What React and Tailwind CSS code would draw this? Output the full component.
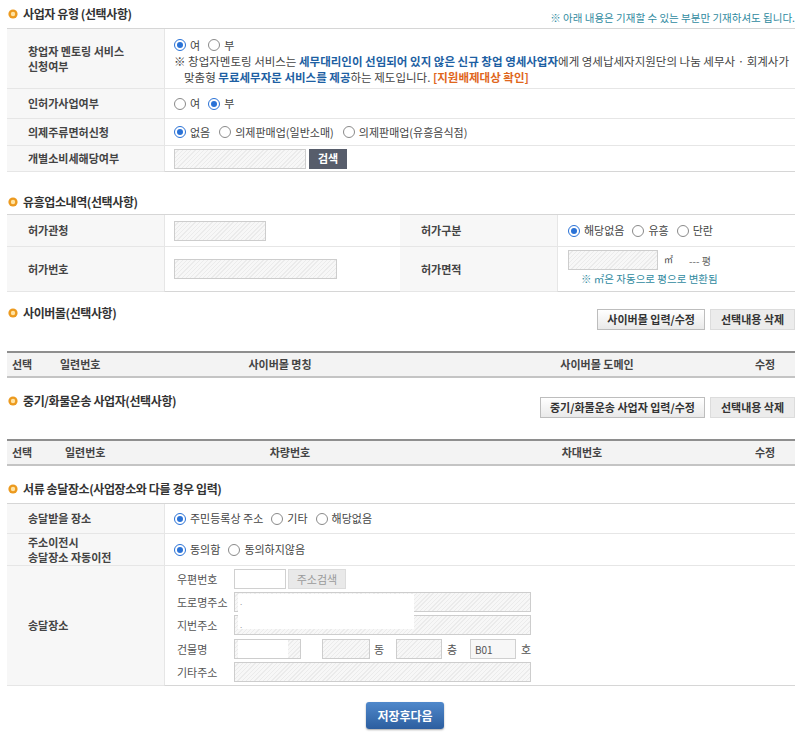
import React from "react";

const hatch =
  "border border-[#cdcdcd] bg-[#f4f4f4] bg-[image:repeating-linear-gradient(135deg,#f7f7f7_0px,#f7f7f7_2px,#ebebeb_2px,#ebebeb_3px)]";

function Dot() {
  return (
    <svg width="10" height="10" viewBox="0 0 10 10" className="shrink-0">
      <circle cx="5" cy="5" r="4.6" fill="#ec9a1f" />
      <circle cx="5" cy="5" r="2.2" fill="#ffe3a3" />
    </svg>
  );
}

function Title({ children }) {
  return (
    <h3 className="flex items-center gap-[5px] pl-[1px] text-[12px] font-bold leading-[14px] tracking-[-0.4px] text-[#333]">
      <Dot />
      {children}
    </h3>
  );
}

function Radio({ checked, label, gap = "mr-[8px]" }) {
  return (
    <span className={`inline-flex items-center gap-[4px] ${gap}`}>
      {checked ? (
        <span className="flex h-[12px] w-[12px] items-center justify-center rounded-full border border-[#2a72d6] bg-white">
          <span className="h-[6px] w-[6px] rounded-full bg-[#2a72d6]" />
        </span>
      ) : (
        <span className="h-[12px] w-[12px] rounded-full border border-[#8a8a8a] bg-white" />
      )}
      <span>{label}</span>
    </span>
  );
}

function Label({ children, className = "" }) {
  return (
    <div
      className={`flex items-center border-b border-[#e6e6e6] bg-[#f7f7f7] pl-[21px] text-[11px] font-bold leading-[15px] text-[#444] ${className}`}
    >
      <div>{children}</div>
    </div>
  );
}

function Value({ children, className = "" }) {
  return (
    <div
      className={`flex items-center border-b border-l border-[#e6e6e6] pl-[9px] text-[11px] text-[#444] ${className}`}
    >
      {children}
    </div>
  );
}

function GrayButtons({ first }) {
  return (
    <div className="mt-[3px] flex gap-[5px]">
      <button className="h-[21px] border border-[#bdbdbd] bg-[image:linear-gradient(#ffffff,#e9e9e9)] px-[9px] text-[11px] font-bold text-[#333]">
        {first}
      </button>
      <button className="h-[21px] w-[85px] border border-[#dcdcdc] bg-[#ececec] text-[11px] font-bold text-[#333]">
        선택내용 삭제
      </button>
    </div>
  );
}

function Box({ className = "", children }) {
  return <div className={`${hatch} h-[20px] ${className}`}>{children}</div>;
}

export default function App() {
  return (
    <div className="min-h-[732px] bg-white pl-[7px] pr-[5px] font-['Noto_Sans_CJK_KR',sans-serif] text-[#444]">
      {/* 사업자 유형 */}
      <div className="flex h-[28px] items-start justify-between pt-[7px]">
        <Title>사업자 유형 (선택사항)</Title>
        <span className="mt-[4px] text-[10.5px] leading-[14px] text-[#2f8aa0]">
          ※ 아래 내용은 기재할 수 있는 부분만 기재하셔도 됩니다.
        </span>
      </div>
      <div className="grid grid-cols-[157px_1fr] border-t border-[#d6d6d6]">
        <Label className="h-[60px]">
          창업자 멘토링 서비스
          <br />
          신청여부
        </Label>
        <div className="flex h-[60px] flex-col border-b border-l border-[#e6e6e6] pl-[9px] pt-[8px] text-[11.5px] text-[#444]">
          <div className="flex h-[16px] items-center text-[11px]">
            <Radio checked label="여" />
            <Radio label="부" />
          </div>
          <div className="whitespace-nowrap leading-[16px]">
            ※ 창업자멘토링 서비스는{" "}
            <b className="text-[#1d5fa3]">세무대리인이 선임되어 있지 않은 신규 창업 영세사업자</b>에게
            영세납세자지원단의 나눔 세무사 · 회계사가
          </div>
          <div className="whitespace-nowrap pl-[10px] leading-[16px]">
            맞춤형 <b className="text-[#1d5fa3]">무료세무자문 서비스를 제공</b>하는 제도입니다.{" "}
            <b className="text-[#e0661c]">[지원배제대상 확인]</b>
          </div>
        </div>

        <Label className="h-[30px]">인허가사업여부</Label>
        <Value className="h-[30px]">
          <Radio label="여" />
          <Radio checked label="부" />
        </Value>

        <Label className="h-[27px]">의제주류면허신청</Label>
        <Value className="h-[27px]">
          <Radio checked label="없음" gap="mr-[9px]" />
          <Radio label="의제판매업(일반소매)" gap="mr-[9px]" />
          <Radio label="의제판매업(유흥음식점)" />
        </Value>

        <Label className="h-[26px] border-[#d6d6d6]">개별소비세해당여부</Label>
        <Value className="h-[26px] gap-[3px] border-b-[#d6d6d6]">
          <Box className="h-[19px] w-[132px]" />
          <button className="h-[20px] w-[38px] bg-[#575d6b] text-[11px] font-bold text-white">검색</button>
        </Value>
      </div>

      {/* 유흥업소내역 */}
      <div className="mt-[23px] h-[14px]">
        <Title>유흥업소내역(선택사항)</Title>
      </div>
      <div className="mt-[5px] grid grid-cols-[157px_236px_157px_1fr] border-t border-[#d6d6d6]">
        <Label className="h-[32px]">허가관청</Label>
        <Value className="h-[32px]">
          <Box className="w-[92px]" />
        </Value>
        <Label className="h-[32px] pl-[20px]">허가구분</Label>
        <Value className="h-[32px] pl-[10px]">
          <Radio checked label="해당없음" />
          <Radio label="유흥" />
          <Radio label="단란" />
        </Value>

        <Label className="h-[45px] border-[#d6d6d6]">허가번호</Label>
        <Value className="h-[45px] border-b-[#d6d6d6]">
          <Box className="h-[19px] w-[163px]" />
        </Value>
        <Label className="h-[45px] border-[#d6d6d6] pl-[20px]">허가면적</Label>
        <div className="flex h-[45px] flex-col border-b border-l border-[#d6d6d6] border-l-[#e6e6e6] pl-[10px] pt-[3px] text-[11px] text-[#444]">
          <div className="flex h-[20px] items-center">
            <Box className="w-[90px]" />
            <span className="ml-[6px] text-[9px]">㎡</span>
            <span className="ml-[16px] text-[10px] text-[#666]">--- 평</span>
          </div>
          <div className="mt-[2px] pl-[13px] text-[10.5px] leading-[14px] text-[#2f8aa0]">
            ※ ㎡은 자동으로 평으로 변환됨
          </div>
        </div>
      </div>

      {/* 사이버몰 */}
      <div className="mt-[14px] flex items-start justify-between">
        <Title>사이버몰(선택사항)</Title>
        <GrayButtons first="사이버몰 입력/수정" />
      </div>
      <div className="mt-[21px] grid h-[27px] grid-cols-[38px_75px_320px_314px_1fr] items-center border-t-2 border-b-2 border-t-[#8e8e8e] border-b-[#c4c4c4] bg-[#f3f3f3] text-[11px] font-bold text-[#444]">
        <span className="pl-[5px]">선택</span>
        <span className="pl-[15px]">일련번호</span>
        <span className="text-center">사이버몰 명칭</span>
        <span className="text-center">사이버몰 도메인</span>
        <span className="pl-[1px]">수정</span>
      </div>

      {/* 중기/화물운송 */}
      <div className="mt-[16px] flex items-start justify-between">
        <Title>중기/화물운송 사업자(선택사항)</Title>
        <GrayButtons first="중기/화물운송 사업자 입력/수정" />
      </div>
      <div className="mt-[21px] grid h-[27px] grid-cols-[38px_85px_320px_264px_1fr] items-center border-t-2 border-b-2 border-t-[#8e8e8e] border-b-[#c4c4c4] bg-[#f3f3f3] text-[11px] font-bold text-[#444]">
        <span className="pl-[5px]">선택</span>
        <span className="pl-[20px]">일련번호</span>
        <span className="text-center">차량번호</span>
        <span className="text-center">차대번호</span>
        <span className="pl-[41px]">수정</span>
      </div>

      {/* 서류 송달장소 */}
      <div className="mt-[16px] h-[14px]">
        <Title>서류 송달장소(사업장소와 다를 경우 입력)</Title>
      </div>
      <div className="mt-[7px] grid grid-cols-[157px_1fr] border-t border-[#d6d6d6]">
        <Label className="h-[30px]">송달받을 장소</Label>
        <Value className="h-[30px]">
          <Radio checked label="주민등록상 주소" />
          <Radio label="기타" />
          <Radio label="해당없음" />
        </Value>

        <Label className="h-[32px]">
          주소이전시
          <br />
          송달장소 자동이전
        </Label>
        <Value className="h-[32px]">
          <Radio checked label="동의함" />
          <Radio label="동의하지않음" />
        </Value>

        <Label className="h-[120px] border-[#d6d6d6]">송달장소</Label>
        <div className="relative flex h-[120px] flex-col gap-[3px] border-b border-l border-[#d6d6d6] border-l-[#e6e6e6] pl-[12px] pt-[3px] text-[11px] text-[#555]">
          <div className="flex h-[20px] items-center">
            <span className="w-[57px]">우편번호</span>
            <div className="h-[20px] w-[52px] border border-[#d0d0d0] bg-white" />
            <button className="ml-[2px] h-[20px] w-[58px] border border-[#dcdcdc] bg-[#e9e9e9] text-[11px] text-[#9a9a9a]">
              주소검색
            </button>
          </div>
          <div className="flex h-[20px] items-center">
            <span className="w-[57px]">도로명주소</span>
            <Box className="w-[297px]" />
          </div>
          <div className="flex h-[20px] items-center">
            <span className="w-[57px]">지번주소</span>
            <Box className="w-[297px]" />
          </div>
          <div className="mt-[1px] flex h-[20px] items-center">
            <span className="w-[57px]">건물명</span>
            <Box className="w-[67px] pl-[3px]">
              <div className="h-[18px] w-[50px] bg-white" />
            </Box>
            <Box className="ml-[21px] w-[48px]" />
            <span className="ml-[4px] w-[22px]">동</span>
            <Box className="w-[46px]" />
            <span className="ml-[5px] w-[23px]">층</span>
            <div className="flex h-[20px] w-[46px] items-center border border-[#d0d0d0] bg-[#f7f7f7] pl-[4px] text-[10px] text-[#555]">
              B01
            </div>
            <span className="ml-[5px]">호</span>
          </div>
          <div className="flex h-[20px] items-center">
            <span className="w-[57px]">기타주소</span>
            <Box className="w-[297px]" />
          </div>
          {/* blanked address area */}
          <div className="absolute left-[73px] top-[28px] h-[35px] w-[176px] bg-white pl-[2px] text-[8px] leading-[10px] text-[#999]">
            <div className="pt-[3px]">.</div>
            <div className="pt-[13px]">.</div>
          </div>
        </div>
      </div>

      <div className="mt-[16px] flex justify-center">
        <button className="ml-[8px] h-[27px] w-[78px] rounded-[3px] bg-[image:linear-gradient(#4f88cb,#2c5e9f)] text-[12px] font-bold text-white shadow-[0_1px_2px_rgba(0,0,0,0.35)]">
          저장후다음
        </button>
      </div>
    </div>
  );
}
